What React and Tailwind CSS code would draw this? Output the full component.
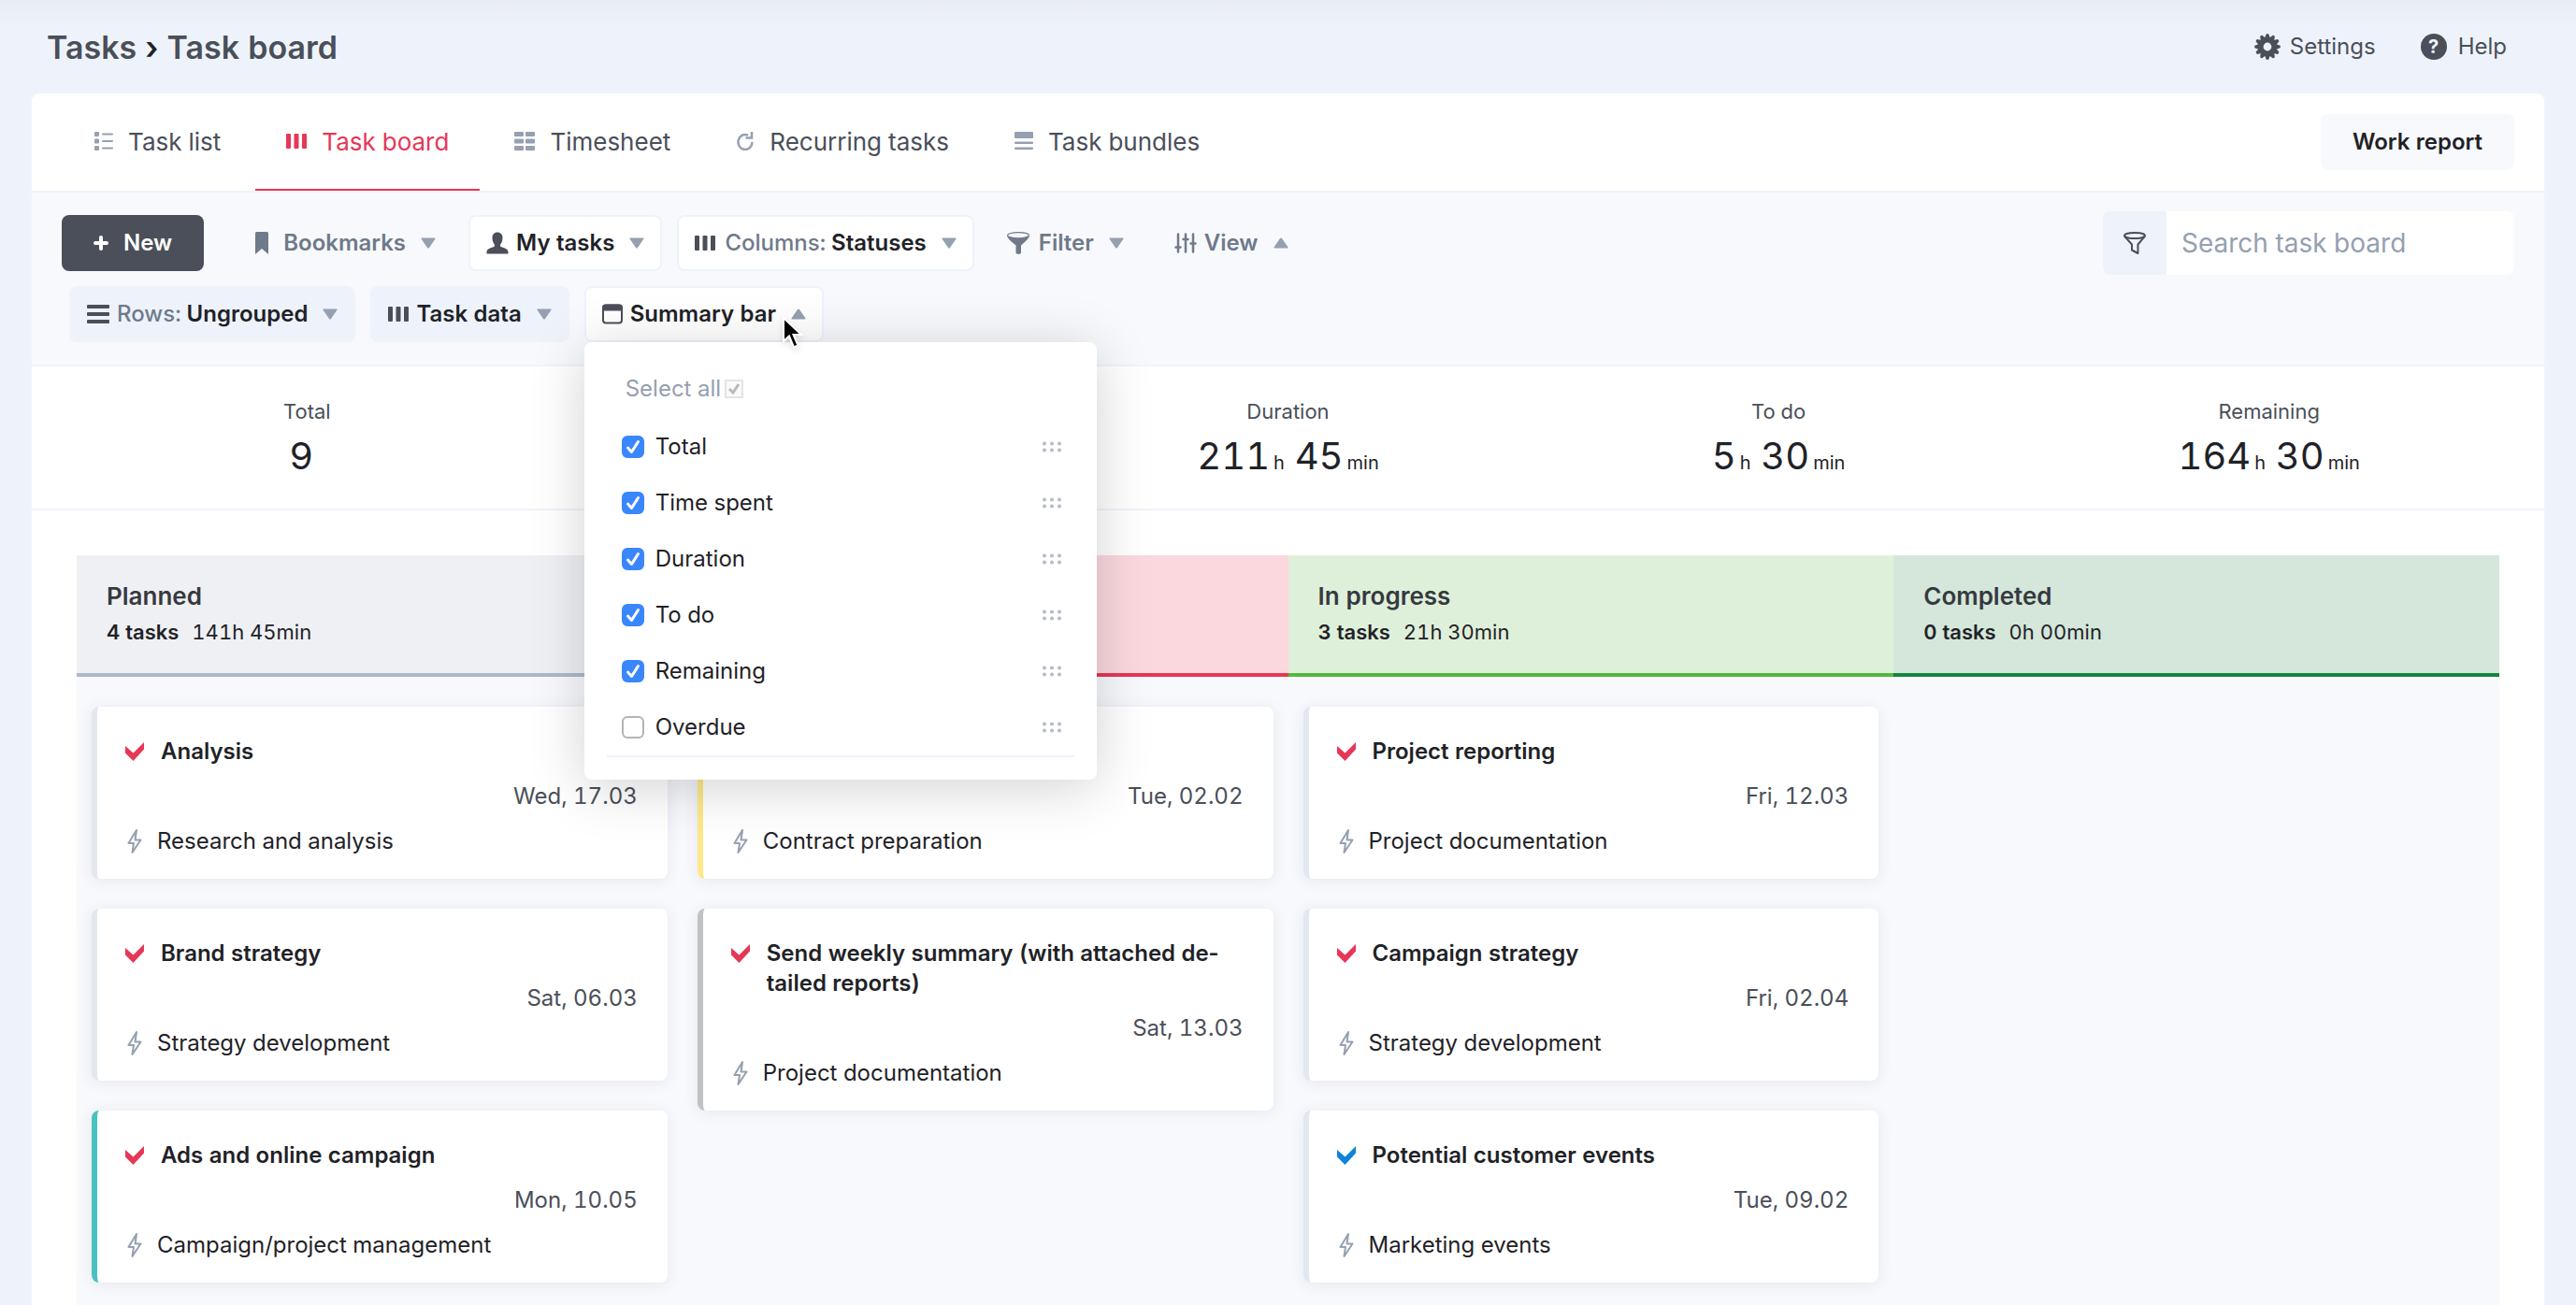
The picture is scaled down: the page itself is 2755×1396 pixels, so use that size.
import React, { useState } from 'react';

const tabs = [
    { name: "Task list", icon: "list" },
    { name: "Task board", icon: "columns", active: true },
    { name: "Timesheet", icon: "sheet" },
    { name: "Recurring tasks", icon: "recurring" },
    { name: "Task bundles", icon: "bundles" }
];

const summary = [
    { label: "Total", count: "9" },
    { label: "Time spent", hours: "46", minutes: "45" },
    { label: "Duration", hours: "211", minutes: "45" },
    { label: "To do", hours: "5", minutes: "30" },
    { label: "Remaining", hours: "164", minutes: "30" }
];

const columns = [
    {
        name: "Planned",
        tasks: "4 tasks",
        time: "141h 45min",
        head: "bg-[#eff0f4] border-[#adb9ca]",
        cards: [
            { title: "Analysis", date: "Wed, 17.03", activity: "Research and analysis", border: "border-[#e2e7f0]" },
            { title: "Brand strategy", date: "Sat, 06.03", activity: "Strategy development", border: "border-[#e2e7f0]" },
            { title: "Ads and online campaign", date: "Mon, 10.05", activity: "Campaign/project management", border: "border-[#49c1c0]" }
        ]
    },
    {
        name: "To do",
        tasks: "2 tasks",
        time: "48h 30min",
        head: "bg-[#fbd8de] border-[#e63757]",
        cards: [
            { title: "Contract", date: "Tue, 02.02", activity: "Contract preparation", border: "border-[#fde88a]" },
            { title: "Send weekly summary (with attached de\u00adtailed reports)", date: "Sat, 13.03", activity: "Project documentation", border: "border-[#c2c2c2]" }
        ]
    },
    {
        name: "In progress",
        tasks: "3 tasks",
        time: "21h 30min",
        head: "bg-[#dff0da] border-[#55b740]",
        cards: [
            { title: "Project reporting", date: "Fri, 12.03", activity: "Project documentation", border: "border-[#e2e7f0]" },
            { title: "Campaign strategy", date: "Fri, 02.04", activity: "Strategy development", border: "border-[#e2e7f0]" },
            { title: "Potential customer events", date: "Tue, 09.02", activity: "Marketing events", border: "border-[#e2e7f0]", check: "text-[#0d84d9]" }
        ]
    },
    {
        name: "Completed",
        tasks: "0 tasks",
        time: "0h 00min",
        head: "bg-[#d4e7da] border-[#178440]",
        cards: []
    }
];

function Icon({ name, className }) {
    if (name === "list") {
        return (
            <svg viewBox="0 0 20 20" className={className} fill="currentColor">
                <rect x="0" y="0" width="5" height="5" rx="1" />
                <rect x="0" y="7.5" width="5" height="5" rx="1" />
                <rect x="0" y="15" width="5" height="5" rx="1" />
                <rect x="8" y="1.5" width="12" height="2" rx="1" />
                <rect x="8" y="9" width="12" height="2" rx="1" />
                <rect x="8" y="16.5" width="12" height="2" rx="1" />
            </svg>
        );
    }
    if (name === "columns") {
        return (
            <svg viewBox="0 0 22 16" className={className} fill="currentColor">
                <rect x="0" y="0" width="5" height="16" rx="1" />
                <rect x="8.5" y="0" width="5" height="16" rx="1" />
                <rect x="17" y="0" width="5" height="16" rx="1" />
            </svg>
        );
    }
    if (name === "sheet") {
        return (
            <svg viewBox="0 0 22 20" className={className} fill="currentColor">
                {[0, 7.5, 15].map((y) => (
                    <g key={y}>
                        <rect x="0" y={y} width="10" height="5" rx="1" />
                        <rect x="12" y={y} width="10" height="5" rx="1" />
                    </g>
                ))}
            </svg>
        );
    }
    if (name === "recurring") {
        return (
            <svg viewBox="0 0 20 20" className={className} fill="none" stroke="currentColor" strokeWidth="2.500">
                <path d="M13 3.6A7.500 8 0 1 0 17.500 11" />
                <path d="M17 0v6.5H10.500" />
            </svg>
        );
    }
    if (name === "bundles") {
        return (
            <svg viewBox="0 0 20 20" className={className} fill="currentColor">
                <rect x="0" y="0" width="20" height="7" rx="1" />
                <rect x="0" y="10.5" width="20" height="2.5" rx="1" />
                <rect x="0" y="16.5" width="20" height="2.5" rx="1" />
            </svg>
        );
    }
    if (name === "rows") {
        return (
            <svg viewBox="0 0 24 20" className={className} fill="currentColor">
                <rect x="0" y="0" width="24" height="4" rx="1" />
                <rect x="0" y="8" width="24" height="4" rx="1" />
                <rect x="0" y="16" width="24" height="4" rx="1" />
            </svg>
        );
    }
    if (name === "bookmark") {
        return (
            <svg viewBox="0 0 14 24" className={className} fill="currentColor">
                <path d="M0 1.5Q0 0 1.5 0H12.5Q14 0 14 1.5V24L7 18L0 24z" />
            </svg>
        );
    }
    if (name === "user") {
        return (
            <svg viewBox="0 0 24 24" className={className} fill="currentColor">
                <path d="M12 0.5C8.5 0.5 6.500 3 6.500 6.500C6.500 9.500 7.700 12.500 9 13.700V15.500C7 17 0.500 17.500 0.500 21.500V23.500H23.500V21.500C23.500 17.500 17 17 15 15.500V13.700C16.300 12.500 17.500 9.500 17.500 6.500C17.500 3 15.500 0.500 12 0.500z" />
            </svg>
        );
    }
    if (name === "filter") {
        return (
            <svg viewBox="0 0 24 24" className={className} fill="currentColor">
                <path d="M0 4C2 7.500 22 7.500 24 4C23.500 7.500 19 11 15 14.500V22.500C15 24.200 9.500 24.200 9.500 22.500V14.500C5 11 0.500 7.500 0 4z" />
                <ellipse cx="12" cy="3.700" rx="11.400" ry="3.100" fill="#f8f9fd" stroke="currentColor" strokeWidth="1.200" />
            </svg>
        );
    }
    if (name === "funnel") {
        return (
            <svg viewBox="0 0 24 24" className={className} fill="none" stroke="currentColor" strokeWidth="2" strokeLinejoin="round">
                <ellipse cx="12" cy="4" rx="11" ry="3" />
                <path d="M1 4.500L9 13.500V19.500L15.500 23V13.500L23 4.500" />
            </svg>
        );
    }
    if (name === "sliders") {
        return (
            <svg viewBox="0 0 24 22" className={className} fill="none" stroke="currentColor" strokeWidth="2.500" strokeLinecap="round">
                <path d="M4 1.500V20.500M12 1.500V20.500M20 1.500V20.500M1.500 15.500H6.500M9.500 7H14.500M17.500 11.500H22.500" />
            </svg>
        );
    }
    if (name === "window") {
        return (
            <svg viewBox="0 0 22 22" className={className} fill="none" stroke="currentColor" strokeWidth="2">
                <rect x="1" y="1.500" width="20" height="19" rx="3" />
                <path d="M1 6.500V4Q1 1.500 4 1.500H18Q21 1.500 21 4V6.500z" fill="currentColor" />
            </svg>
        );
    }
    if (name === "gear") {
        return (
            <svg viewBox="-14 -14 28 28" className={className}>
                <g fill="currentColor">
                    {[0, 30, 60, 90, 120, 150, 180, 210, 240, 270, 300, 330].map((angle) => (
                        <path key={angle} d="M-3 -9L-1.300 -13.500Q0 -14.300 1.300 -13.500L3 -9z" transform={`rotate(${angle})`} />
                    ))}
                </g>
                <circle r="7.200" fill="none" stroke="currentColor" strokeWidth="5.600" />
            </svg>
        );
    }
    if (name === "check") {
        return (
            <svg viewBox="0 0 20 20" className={className} fill="currentColor">
                <path d="M0 4L8.500 11.500L20 0V7.500L8.500 20L0 11.500z" />
            </svg>
        );
    }
    return (
        <svg viewBox="0 0 16 26" className={className} fill="none" stroke="currentColor" strokeWidth="2" strokeLinejoin="round">
            <path d="M10 1L1.500 15H7L5.500 25L14.500 11.500H8.500z" />
        </svg>
    );
}

function Arrow({ up }) {
    return (
        <svg viewBox="0 0 16 12" className="ml-4 h-3 w-4 text-[#95a0b1]" fill="currentColor">
            {up
                ? <path d="M8 0.500Q8.700 0.500 9 1L15.500 10.500Q16 11.500 15 11.500H1Q0 11.500 0.500 10.500L7 1Q7.300 0.500 8 0.500z" />
                : <path d="M8 11.500Q8.700 11.500 9 11L15.500 1.500Q16 0.500 15 0.500H1Q0 0.500 0.500 1.500L7 11Q7.300 11.500 8 11.500z" />}
        </svg>
    );
}

function ToolButton({ icon, iconClass, prefix, label, up, look, expanded }) {
    let style = "border-transparent text-[#6f7a8a]";
    if (look === "white") {
        style = "border-[#eef3fb] bg-white text-[#1f2227]";
    }
    if (look === "tint") {
        style = "border-[#eef3fb] bg-[#eef3fb] text-[#1f2227]";
    }
    return (
        <button
            type="button"
            aria-expanded={expanded}
            className={`flex h-15 items-center whitespace-nowrap rounded-lg border-2 px-[17px] text-2xl font-semibold ${style}`}>
            <Icon name={icon} className={iconClass} />
            {prefix && <span className="mr-1.5 font-medium text-[#6f7a8a]">{prefix}</span>}
            {label}
            <Arrow up={up} />
        </button>
    );
}

function SummaryMenu() {
    const [checked, setChecked] = useState({
        "Total": true,
        "Time spent": true,
        "Duration": true,
        "To do": true,
        "Remaining": true,
        "Overdue": false
    });

    const toggle = (name) => {
        setChecked({ ...checked, [name]: !checked[name] });
    };

    return (
        <div className="absolute top-full left-0 z-10 w-[548px] rounded-lg bg-white px-6 pt-8 pb-6 shadow-[0_8px_60px_rgba(0,0,0,0.18)]">
            <label className="ml-5 flex h-9 items-center gap-1 text-2xl text-[#95a0b1]">
                Select all
                <span className="relative flex">
                    <input type="checkbox" defaultChecked className="h-5 w-5 appearance-none border-2 border-[#e4e4e4] bg-[#fafafa]" />
                    <svg viewBox="0 0 20 20" className="pointer-events-none absolute inset-0" fill="none" stroke="#b9b9b9" strokeWidth="3">
                        <path d="M5 10L9 14L15 5" />
                    </svg>
                </span>
            </label>
            <ul className="mt-3.5 border-b-2 border-[#eef3fb]">
                {Object.keys(checked).map((name) => (
                    <li key={name} className="flex h-15 items-center justify-between pr-3.5 pl-4">
                        <label className="flex items-center gap-3 text-2xl text-[#1f2227]">
                            <span className="relative flex">
                                <input
                                    type="checkbox"
                                    checked={checked[name]}
                                    onChange={() => toggle(name)}
                                    className="h-6 w-6 appearance-none rounded-md border-2 border-[#b4b4b4] bg-white checked:border-[#3a86fd] checked:bg-[#3a86fd]"
                                />
                                {checked[name] &&
                                    <svg viewBox="0 0 24 24" className="pointer-events-none absolute inset-0" fill="none" stroke="#fff" strokeWidth="3" strokeLinecap="round" strokeLinejoin="round">
                                        <path d="M6.500 13L10.500 17.500L17.500 6.500" />
                                    </svg>}
                            </span>
                            {name}
                        </label>
                        <svg viewBox="0 0 20 12" className="h-3 w-5" fill="#b3bac8">
                            {[2, 10, 18].map((x) => (
                                <g key={x}>
                                    <circle cx={x} cy="2.500" r="2" />
                                    <circle cx={x} cy="9.500" r="2" />
                                </g>
                            ))}
                        </svg>
                    </li>
                ))}
            </ul>
        </div>
    );
}

function Card({ card }) {
    return (
        <article className={`rounded-lg border-l-6 bg-white pt-8 pr-8 pb-6 pl-[30px] text-2xl/8 text-[#1f2227] shadow-[0_2px_16px_rgba(40,50,90,0.09)] ${card.border}`}>
            <h3 className="flex font-semibold hyphens-manual">
                <Icon name="check" className={`mt-1.5 mr-[18px] h-5 w-5 shrink-0 ${card.check || "text-[#e63757]"}`} />
                <span>{card.title}</span>
            </h3>
            <p className="mt-4 text-right text-[#4a4f59]">{card.date}</p>
            <p className="mt-4 flex items-center">
                <Icon name="bolt" className="mr-4 ml-0.5 h-6.5 w-4 text-[#95a0b1]" />
                {card.activity}
            </p>
        </article>
    );
}

function App() {
    return (
        <div className="flex h-screen flex-col overflow-hidden bg-[#eef3fb] bg-[linear-gradient(#e9ecf5,#eef3fb_32px)] px-[34px] font-['Inter',sans-serif] tabular-nums text-[#1f2227]">
            <header className="flex h-25 shrink-0 items-center justify-between px-4 pr-10">
                <h1 className="text-[34px] font-semibold text-[#4a4f59]">
                    <a href="#tasks">Tasks</a> <span className="text-[#1f2227]">›</span> Task board
                </h1>
                <div className="flex gap-12 text-2xl text-[#4a4f59]">
                    <a href="#settings" className="flex items-center gap-2.5">
                        <Icon name="gear" className="h-7 w-7" />
                        Settings
                    </a>
                    <a href="#help" className="flex items-center gap-3">
                        <span className="flex h-7 w-7 items-center justify-center rounded-full bg-[#4a4f59] text-xl font-bold text-[#eef3fb]">?</span>
                        Help
                    </a>
                </div>
            </header>

            <main className="flex grow flex-col rounded-t-lg bg-white">
                <div className="flex items-center justify-between border-b-2 border-[#eef3fb] pr-8 pl-[34px]">
                    <nav className="flex gap-1">
                        {tabs.map((tab) => (
                            <a
                                key={tab.name}
                                href="#tab"
                                className={`flex h-26 items-center gap-4 border-b-2 px-[33px] text-[26px] ${tab.active ? "border-[#e63757] text-[#e63757]" : "border-transparent text-[#4a4f59]"}`}>
                                <Icon
                                    name={tab.icon}
                                    className={tab.active ? "h-4 w-[22px]" : tab.icon === "sheet" ? "h-5 w-[22px] text-[#95a0b1]" : "h-5 w-5 text-[#95a0b1]"}
                                />
                                {tab.name}
                            </a>
                        ))}
                    </nav>
                    <button type="button" className="h-15 rounded-lg bg-[#f8f9fd] px-[34px] text-2xl font-semibold">Work report</button>
                </div>

                <div className="flex items-start justify-between border-b-2 border-[#eef3fb] bg-[#f8f9fd] px-8 pt-5 pb-6">
                    <div className="flex flex-col gap-4 pt-1">
                        <div className="flex">
                            <button type="button" className="mr-9 flex h-15 items-center gap-4 rounded-lg bg-[#4a4f59] px-[34px] text-2xl font-semibold text-white">
                                <svg viewBox="0 0 16 16" className="h-4 w-4" fill="none" stroke="currentColor" strokeWidth="4" strokeLinecap="round">
                                    <path d="M8 2V14M2 8H14" />
                                </svg>
                                New
                            </button>
                            <div className="flex gap-4">
                                <ToolButton icon="bookmark" iconClass="mr-4 h-6 w-3.5" label="Bookmarks" />
                                <ToolButton icon="user" iconClass="mr-2 h-6 w-6 text-[#4a4f59]" label="My tasks" look="white" />
                                <ToolButton icon="columns" iconClass="mr-2.5 h-4 w-[22px] text-[#4a4f59]" prefix="Columns:" label="Statuses" look="white" />
                                <ToolButton icon="filter" iconClass="mr-2.5 h-6 w-6" label="Filter" />
                                <ToolButton icon="sliders" iconClass="mr-2 h-[22px] w-6" label="View" up />
                            </div>
                        </div>
                        <div className="flex gap-4 pl-2">
                            <ToolButton icon="rows" iconClass="mr-2 h-5 w-6 text-[#4a4f59]" prefix="Rows:" label="Ungrouped" look="tint" />
                            <ToolButton icon="columns" iconClass="mr-2 h-4 w-[22px] text-[#4a4f59]" label="Task data" look="tint" />
                            <div className="relative">
                                <ToolButton icon="window" iconClass="mr-2 h-[22px] w-[22px] text-[#4a4f59]" label="Summary bar" look="white" up expanded />
                                <SummaryMenu />
                                <svg viewBox="0 0 24 36" className="pointer-events-none absolute top-8 right-5 z-20 h-9 w-6 drop-shadow-md" fill="#000" stroke="#fff" strokeWidth="2">
                                    <path d="M1 2V27L7 21.500L12 33.500L16.500 31.500L11.500 20H20z" />
                                </svg>
                            </div>
                        </div>
                    </div>
                    <form className="flex h-17 overflow-hidden rounded-lg">
                        <button type="button" aria-label="Filter tasks" className="flex w-17 items-center justify-center bg-[#eef3fb] text-[#4a4f59]">
                            <Icon name="funnel" className="h-6 w-6" />
                        </button>
                        <input
                            type="text"
                            aria-label="Search task board"
                            placeholder="Search task board"
                            className="w-[372px] bg-white px-4 text-[28px] placeholder:text-[#95a0b1]"
                        />
                    </form>
                </div>

                <section className="grid grid-cols-5 border-b-2 border-[#eef3fb] px-8 pt-8 pb-6.5 text-center">
                    {summary.map((item) => (
                        <div key={item.label}>
                            <h2 className="text-[22px]/8 text-[#4a4f59]">{item.label}</h2>
                            {item.count
                                ? <p className="mt-0.5 mr-3 text-[40px]/15">{item.count}</p>
                                : <p className="mt-0.5 text-[40px]/15">
                                    {item.hours}<span className="ml-1 text-xl/6">h</span> {item.minutes}<span className="ml-1 text-xl/6">min</span>
                                </p>}
                        </div>
                    ))}
                </section>

                <section className="mx-12 mt-12 grid grow grid-cols-4 bg-[#f8f9fd]">
                    {columns.map((column) => (
                        <div key={column.name}>
                            <header className={`h-[130px] border-b-4 px-8 pt-6 ${column.head}`}>
                                <h2 className="text-[26px]/10 font-semibold text-[#36393f]">{column.name}</h2>
                                <p className="text-[22px]/9"><strong className="mr-3.5 font-semibold">{column.tasks}</strong>{column.time}</p>
                            </header>
                            <div className="flex flex-col gap-8 px-4 pt-8">
                                {column.cards.map((card) => (
                                    <Card key={card.title} card={card} />
                                ))}
                            </div>
                        </div>
                    ))}
                </section>
            </main>
        </div>
    );
}

export default App;
